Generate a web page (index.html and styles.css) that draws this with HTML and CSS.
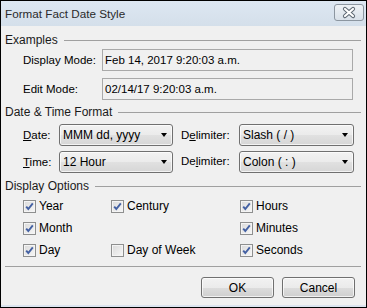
FILE: index.html
```html
<!DOCTYPE html>
<html lang="en">
<head>
    <meta charset="UTF-8">
    <title>Format Fact Date Style</title>
    <link rel="stylesheet" href="styles.css">
</head>
<body>
    <div class="dialog">
        <div class="titlebar">
            <span class="title">Format Fact Date Style</span>
            <span class="close-btn">
                <svg width="28" height="15" viewBox="0 0 28 15">
                    <path d="M10 4 L18 11 M18 4 L10 11" stroke="#5d6873" stroke-width="4.2" stroke-linecap="round"/>
                    <path d="M10 4 L18 11 M18 4 L10 11" stroke="#ffffff" stroke-width="2.2" stroke-linecap="round"/>
                </svg>
            </span>
        </div>

        <div class="dialog-body">
            <div class="group-title">Examples</div>
            <div class="example-row">
                <span class="field-label">Display Mode:</span>
                <div class="readonly-box">Feb 14, 2017 9:20:03 a.m.</div>
            </div>
            <div class="example-row">
                <span class="field-label">Edit Mode:</span>
                <div class="readonly-box">02/14/17 9:20:03 a.m.</div>
            </div>

            <div class="group-title">Date &amp; Time Format</div>
            <div class="format-grid">
                <span class="field-label"><u>D</u>ate:</span>
                <div class="combo"><span>MMM dd, yyyy</span><i class="arrow"></i></div>
                <span class="field-label delim">D<u>e</u>limiter:</span>
                <div class="combo"><span>Slash ( / )</span><i class="arrow"></i></div>

                <span class="field-label"><u>T</u>ime:</span>
                <div class="combo"><span>12 Hour</span><i class="arrow"></i></div>
                <span class="field-label delim raised">De<u>l</u>imiter:</span>
                <div class="combo"><span>Colon ( : )</span><i class="arrow"></i></div>
            </div>

            <div class="group-title">Display Options</div>
            <div class="options-grid">
                <label class="option"><span class="check on"></span>Year</label>
                <label class="option"><span class="check on"></span>Century</label>
                <label class="option"><span class="check on"></span>Hours</label>

                <label class="option"><span class="check on"></span>Month</label>
                <span></span>
                <label class="option"><span class="check on"></span>Minutes</label>

                <label class="option"><span class="check on"></span>Day</label>
                <label class="option"><span class="check"></span>Day of Week</label>
                <label class="option"><span class="check on"></span>Seconds</label>
            </div>

            <div class="separator"></div>

            <div class="buttons">
                <button class="btn">OK</button>
                <button class="btn">Cancel</button>
            </div>
        </div>
    </div>
</body>
</html>
```

FILE: styles.css
```css
* {
    margin: 0;
    padding: 0;
    box-sizing: border-box;
}

body {
    font-family: 'Liberation Sans', Arial, sans-serif;
    font-size: 11.5px;
    color: #000;
    background: #f0f0f0;
}

.dialog {
    width: 367px;
    height: 308px;
    border: 1px solid #000;
    background: #f0f0f0;
    display: flex;
    flex-direction: column;
}

/* Title bar */
.titlebar {
    height: 25px;
    flex-shrink: 0;
    display: flex;
    justify-content: space-between;
    align-items: flex-start;
    padding-left: 4px;
    background: linear-gradient(#dde7f2, #d4dfea);
}

.title {
    margin-top: 6px;
    color: #2a2a2a;
    font-size: 11.7px;
}

.close-btn {
    margin-top: 3px;
    margin-right: 2px;
    width: 30px;
    height: 17px;
    border: 1px solid #8c96a0;
    border-radius: 3px;
    background: linear-gradient(#eef2f6, #d9e1e9);
    display: flex;
    align-items: center;
    justify-content: center;
}

/* Body */
.dialog-body {
    flex: 1;
    padding: 0 5px 0 4px;
    border-bottom: 2px solid #dbe4ee;
}

.group-title {
    height: 14px;
    line-height: 14px;
    display: flex;
    align-items: center;
    gap: 6px;
    color: #1a1a1a;
    font-size: 12px;
}

.group-title::after {
    content: "";
    flex: 1;
    height: 1px;
    background: #a0a0a0;
}

.group-title:first-child {
    margin-top: 7px;
    margin-bottom: 2px;
}

.field-label {
    white-space: nowrap;
}

.example-row {
    display: flex;
    align-items: center;
    padding-left: 18px;
    margin-bottom: 7px;
}

.example-row .field-label {
    width: 79px;
}

.readonly-box {
    width: 251px;
    height: 22px;
    line-height: 20px;
    padding-left: 2px;
    border: 1px solid #a9a9a9;
    background: #f0f0f0;
}

.example-row + .group-title {
    margin-top: -2px;
    margin-bottom: 5px;
}

/* Date & Time Format */
.format-grid {
    display: grid;
    grid-template-columns: 36px 114px 66px 115px;
    grid-auto-rows: 22px;
    row-gap: 5px;
    align-items: center;
    padding-left: 18px;
}

.delim {
    padding-left: 8px;
}

.delim.raised {
    margin-top: -3px;
}

.combo {
    height: 22px;
    display: flex;
    align-items: center;
    justify-content: space-between;
    padding: 0 5px 0 3px;
    border: 1px solid #707070;
    border-radius: 3px;
    background: linear-gradient(#f2f2f2 0%, #ebebeb 50%, #e1e1e1 50%, #d6d6d6 100%);
    box-shadow: inset 0 0 0 1px rgba(255, 255, 255, 0.7);
    font-size: 12px;
}

.arrow {
    width: 0;
    height: 0;
    border-left: 3.5px solid transparent;
    border-right: 3.5px solid transparent;
    border-top: 4px solid #000;
}

.format-grid + .group-title {
    margin-top: 6px;
    margin-bottom: 2px;
}

/* Display Options */
.options-grid {
    display: grid;
    grid-template-columns: 88px 129px 1fr;
    grid-auto-rows: 22px;
    align-items: center;
    padding-left: 18px;
}

.option {
    display: flex;
    align-items: center;
    gap: 3px;
    font-size: 12px;
}

.check {
    width: 13px;
    height: 13px;
    border: 1px solid #8e8f8f;
    background: linear-gradient(135deg, #dadada, #f7f7f7);
    box-shadow: inset 0 0 0 1px #f4f4f4;
}

.check.on {
    background-image:
        url("data:image/svg+xml,%3Csvg xmlns='http://www.w3.org/2000/svg' width='11' height='11'%3E%3Cpath d='M2.2 5.6 L4.3 8 L8.8 2.3' fill='none' stroke='%234461a3' stroke-width='1.9'/%3E%3C/svg%3E"),
        linear-gradient(135deg, #dadada, #f7f7f7);
    background-repeat: no-repeat;
    background-position: center;
}

.separator {
    margin-top: 5px;
    height: 1px;
    background: #a0a0a0;
}

.buttons {
    display: flex;
    justify-content: flex-end;
    gap: 8px;
    margin-top: 10px;
    padding-right: 6px;
}

.btn {
    width: 73px;
    height: 21px;
    font-family: inherit;
    font-size: 12px;
    color: #000;
    border: 1px solid #707070;
    border-radius: 3px;
    background: linear-gradient(#f2f2f2 0%, #ebebeb 50%, #dddddd 50%, #cfcfcf 100%);
    box-shadow: inset 0 0 0 1px rgba(255, 255, 255, 0.7);
}
```
